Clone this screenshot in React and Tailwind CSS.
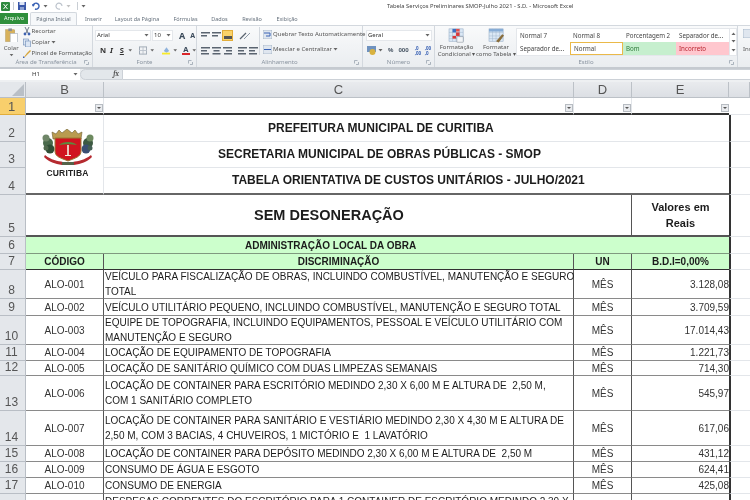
const sans = { fontFamily: '"Noto Sans", sans-serif' };

const rows = [
  ["ALO-001", "VEÍCULO PARA FISCALIZAÇÃO DE OBRAS, INCLUINDO COMBUSTÍVEL, MANUTENÇÃO E SEGURO\nTOTAL", "3.128,08"],
  ["ALO-002", "VEÍCULO UTILITÁRIO PEQUENO, INCLUINDO COMBUSTÍVEL, MANUTENÇÃO E SEGURO TOTAL", "3.709,59"],
  ["ALO-003", "EQUIPE DE TOPOGRAFIA, INCLUINDO EQUIPAMENTOS, PESSOAL E VEÍCULO UTILITÁRIO COM\nMANUTENÇÃO E SEGURO", "17.014,43"],
  ["ALO-004", "LOCAÇÃO DE EQUIPAMENTO DE TOPOGRAFIA", "1.221,73"],
  ["ALO-005", "LOCAÇÃO DE SANITÁRIO QUÍMICO COM DUAS LIMPEZAS SEMANAIS", "714,30"],
  ["ALO-006", "LOCAÇÃO DE CONTAINER PARA ESCRITÓRIO MEDINDO 2,30 X 6,00 M E ALTURA DE  2,50 M,\nCOM 1 SANITÁRIO COMPLETO", "545,97"],
  ["ALO-007", "LOCAÇÃO DE CONTAINER PARA SANITÁRIO E VESTIÁRIO MEDINDO 2,30 X 4,30 M E ALTURA DE\n2,50 M, COM 3 BACIAS, 4 CHUVEIROS, 1 MICTÓRIO E  1 LAVATÓRIO", "617,06"],
  ["ALO-008", "LOCAÇÃO DE CONTAINER PARA DEPÓSITO MEDINDO 2,30 X 6,00 M E ALTURA DE  2,50 M", "431,12"],
  ["ALO-009", "CONSUMO DE ÁGUA E ESGOTO", "624,41"],
  ["ALO-010", "CONSUMO DE ENERGIA", "425,08"],
];

function Lines({ n = 3, align = "l" }) {
  const w = [9, 6, 8];
  return (
    <svg width="11" height="10" viewBox="0 0 11 10">
      {Array.from({ length: n }).map((_, i) => {
        const len = w[i % 3];
        const x = align === "l" ? 1 : align === "r" ? 10 - len : (11 - len) / 2;
        return <rect key={i} x={x} y={1 + i * 3} width={len} height="1.5" fill="#5a6470" />;
      })}
    </svg>
  );
}

function Arrow({ className = "" }) {
  return (
    <svg width="5" height="3" viewBox="0 0 5 3" className={className}>
      <path d="M0.5 0h4L2.5 2.5z" fill="#666" />
    </svg>
  );
}

function Launcher() {
  return (
    <svg width="5" height="5" viewBox="0 0 5 5" className="absolute right-[3px] bottom-[2px]">
      <path d="M0.5 0.5h3M0.5 0.5v3M4.5 2v2.5H2" stroke="#9aa4b0" strokeWidth="0.8" fill="none" />
    </svg>
  );
}

function Group({ width, label, children }) {
  return (
    <div className={`${width} relative flex flex-col border-r border-[#d3d8de] shrink-0`}>
      <div className="flex-1 min-h-0 flex">{children}</div>
      <div className="h-[10px] text-center text-[6px] leading-[10px] text-[#8a94a0]">{label}</div>
      <Launcher />
    </div>
  );
}

function Combo({ className, children }) {
  return (
    <div className={`${className} h-[11px] bg-white border border-[#e4e7eb] flex items-center justify-between px-[1px] text-[6px] text-[#333]`}>
      <span>{children}</span>
      <Arrow />
    </div>
  );
}

function GalleryCell({ className = "", children }) {
  return <div className={`h-[13px] w-[53px] flex items-center px-[3px] text-[6.2px] whitespace-nowrap overflow-hidden ${className}`}>{children}</div>;
}

function GridIcon({ kind }) {
  return (
    <svg width="19" height="16" viewBox="0 0 19 17">
      <rect x="1" y="1" width="16" height="14" fill="#dbe8f5" stroke="#8fa7c2" strokeWidth="0.6" />
      <path d="M1 5h16M1 9h16M1 12h16M5 1v14M9 1v14M13 1v14" stroke="#9db3cb" strokeWidth="0.5" />
      {kind === "cond" ? (
        <>
          <rect x="5" y="1" width="4" height="4" fill="#3b6fc2" />
          <rect x="9" y="5" width="4" height="4" fill="#d9383a" />
          <rect x="5" y="9" width="4" height="3" fill="#d9383a" />
          <rect x="9" y="1" width="4" height="3" fill="#e0504f" />
          <rect x="10" y="10" width="7" height="6" fill="#f2f4f7" stroke="#6d7783" strokeWidth="0.5" />
        </>
      ) : (
        <>
          <rect x="1" y="1" width="16" height="3" fill="#86acd6" />
          <path d="M9 15l7-8 2 1.5-6 8z" fill="#8a6d3b" />
        </>
      )}
    </svg>
  );
}

function Logo() {
  return (
    <div className="flex flex-col items-center pl-[6px]">
      <svg width="54" height="38" viewBox="0 0 54 38">
        <circle cx="7" cy="14" r="5" fill="#4a6a4c" />
        <circle cx="5" cy="9" r="3.5" fill="#6f8668" />
        <circle cx="9" cy="20" r="4.5" fill="#2f4e36" />
        <circle cx="5" cy="19" r="2.5" fill="#50694e" />
        <circle cx="47" cy="14" r="5" fill="#3d5a42" />
        <circle cx="49" cy="9" r="3.5" fill="#6d8a5f" />
        <circle cx="45" cy="20" r="4.5" fill="#3a4f73" />
        <circle cx="49" cy="19" r="2.5" fill="#455f55" />
        <path d="M12 10l-1-7 4 2 3-4 3 3 5-4 5 4 3-3 3 4 4-2-1 7z" fill="#b99b50" stroke="#6f5f30" strokeWidth="0.6" />
        <path d="M14 9h26v13c0 6-6 7-13 10-7-3-13-4-13-10z" fill="#d01420" stroke="#9b7b35" strokeWidth="1" />
        <path d="M18 16c4-4 14-4 18 0-5-1-13-1-18 0z" fill="#5b8a3e" />
        <rect x="26.2" y="16" width="1.6" height="10" fill="#f5efe4" />
        <rect x="24" y="26" width="6" height="1" fill="#f5efe4" />
        <path d="M4 26c6 5 13 6 18 7l-1 3c-7-1-13-3-18-8zM50 26c-6 5-13 6-18 7l1 3c7-1 13-3 18-8z" fill="#b52a30" />
        <path d="M21 33h12v3H21z" fill="#55634a" />
      </svg>
      <div className="text-[8.5px] leading-[9px] mt-[2px] font-bold tracking-[0.2px] text-[#222]">CURITIBA</div>
    </div>
  );
}

function RowHead({ children, active, className = "" }) {
  return (
    <div className={`border-r border-b border-[#b9bec5] flex items-end justify-center pr-[2px] text-[12px] leading-[15px] text-[#555] ${active ? "bg-[#f8cf6c]" : "bg-[#e4e7eb]"} ${className}`}>
      {children}
    </div>
  );
}

function FCell({ className = "" }) {
  return <div className={`border-b border-[#e3e6ea] ${className}`} />;
}

function Filter() {
  return (
    <div className="absolute right-0 bottom-[1px] w-[8px] h-[8px] bg-[#e9ebee] border border-[#b7bcc2] flex items-center justify-center">
      <svg width="4" height="2" viewBox="0 0 4 2"><path d="M0 0h4L2 2z" fill="#555" /></svg>
    </div>
  );
}

export default function App() {
  return (
    <div className="w-[750px] h-[500px] overflow-hidden bg-white flex flex-col blur-[0.35px]" style={sans}>
      {/* Title bar */}
      <div className="h-[12px] shrink-0 flex items-center relative bg-white">
        <div className="flex items-center gap-[3px] pl-[1px]">
          <svg width="9" height="9" viewBox="0 0 9 9"><rect width="9" height="9" rx="1" fill="#2f8a3f" /><path d="M2.5 2l4 5M6.5 2l-4 5" stroke="#fff" strokeWidth="1" /></svg>
          <div className="w-px h-[8px] bg-[#c9ced4]" />
          <svg width="8" height="8" viewBox="0 0 8 8" className="ml-[1px]"><rect width="8" height="8" fill="#3a57a8" /><rect x="1.5" y="0" width="5" height="3" fill="#dfe6f5" /><rect x="2" y="5" width="4" height="3" fill="#8ea1d0" /></svg>
          <svg width="8" height="8" viewBox="0 0 8 8" className="ml-[3px]"><path d="M1 4a3 3 0 1 1 2 3" stroke="#3a62b5" strokeWidth="1.4" fill="none" /><path d="M0 2l3 .5L1 5z" fill="#3a62b5" /></svg>
          <Arrow />
          <svg width="8" height="8" viewBox="0 0 8 8" className="ml-[4px]"><path d="M7 4a3 3 0 1 0-2 3" stroke="#bcc3cc" strokeWidth="1.2" fill="none" /></svg>
          <Arrow className="opacity-40" />
          <div className="w-px h-[8px] bg-[#c9ced4] ml-[3px]" />
          <Arrow />
        </div>
        <div className="absolute left-[387px] top-[0px] text-[5.8px] leading-[12px] text-[#444] whitespace-nowrap">Tabela Serviços Preliminares SMOP-Julho 2021 - S.D.  -  Microsoft Excel</div>
      </div>

      {/* Tabs */}
      <div className="h-[13px] shrink-0 flex items-end text-[5.5px] text-[#66717d] bg-white">
        <div className="w-[28px] h-[11px] bg-[#2f8f3c] text-white flex items-center justify-center mb-px">Arquivo</div>
        <div className="ml-[2px] w-[47px] h-[13px] bg-[#f6f8fa] border border-b-0 border-[#d3d8de] rounded-t-[2px] flex items-center justify-center">Página Inicial</div>
        <div className="ml-[8px] w-[16px] text-center h-[12px] leading-[12px]">Inserir</div>
        <div className="ml-[13px] w-[46px] text-center h-[12px] leading-[12px] whitespace-nowrap">Layout da Página</div>
        <div className="ml-[13px] w-[25px] text-center h-[12px] leading-[12px]">Fórmulas</div>
        <div className="ml-[13px] w-[17px] text-center h-[12px] leading-[12px]">Dados</div>
        <div className="ml-[13px] w-[22px] text-center h-[12px] leading-[12px]">Revisão</div>
        <div className="ml-[13px] w-[22px] text-center h-[12px] leading-[12px]">Exibição</div>
      </div>

      {/* Ribbon */}
      <div className="h-[42px] shrink-0 flex bg-gradient-to-b from-[#f9fafb] to-[#eaedf0] border-t border-[#d3d8de] text-[#555] overflow-hidden">
        <Group width="w-[93px]" label="Área de Transferência">
          <div className="w-[25px] flex flex-col items-center pt-[2px] text-[6px] leading-[7px]">
            <svg width="15" height="16" viewBox="0 0 15 16"><rect x="1" y="2" width="10" height="13" fill="#d8b25c" stroke="#a8883f" strokeWidth="0.5" /><rect x="4" y="0.5" width="4" height="3" fill="#8b8f96" /><rect x="6" y="6" width="8" height="10" fill="#fff" stroke="#9aa6b4" strokeWidth="0.6" /></svg>
            <span className="mt-[3px]">Colar</span>
            <Arrow className="mt-[2px]" />
          </div>
          <div className="flex flex-col gap-[2px] pt-[1px] text-[6px] leading-[9px]">
            <div className="flex items-center gap-[1px]"><svg width="8" height="9" viewBox="0 0 8 9"><path d="M2 0l3 6M6 0L3 6" stroke="#6f7b88" /><circle cx="2" cy="7" r="1.4" fill="#3d62b0" /><circle cx="6" cy="7" r="1.4" fill="#3d62b0" /></svg>Recortar</div>
            <div className="flex items-center gap-[1px]"><svg width="8" height="9" viewBox="0 0 8 9"><rect x="0.5" y="1" width="5" height="6" fill="#dbe6f4" stroke="#6d8ab5" strokeWidth="0.6" /><rect x="2.5" y="3" width="5" height="6" fill="#dbe6f4" stroke="#6d8ab5" strokeWidth="0.6" /></svg>Copiar <Arrow /></div>
            <div className="flex items-center gap-[1px] whitespace-nowrap"><svg width="8" height="9" viewBox="0 0 8 9"><path d="M1 8l3-4 3-3 1 1-3 3-3 3z" fill="#d7a53a" /><path d="M0 7l2 2-2 0z" fill="#3d62b0" /></svg>Pincel de Formatação</div>
          </div>
        </Group>

        <Group width="w-[104px]" label="Fonte">
          <div className="flex flex-col pl-[2px] pt-[4px] gap-[4px] w-full">
            <div className="flex items-center gap-px">
              <Combo className="w-[56px]">Arial</Combo>
              <Combo className="w-[21px]">10</Combo>
              <span className="ml-[5px] text-[9px] leading-[10px] font-bold text-[#3b4a5a]">A</span>
              <span className="ml-[4px] text-[7px] leading-[10px] font-bold text-[#3b4a5a]">A</span>
            </div>
            <div className="flex items-center pl-[5px] text-[7.5px] leading-[10px] text-[#333]">
              <b className="w-[11px]">N</b>
              <i className="w-[11px] font-bold">I</i>
              <u className="w-[9px] font-bold">S</u>
              <Arrow />
              <svg width="9" height="9" viewBox="0 0 9 9" className="ml-[7px]"><rect x="0.5" y="0.5" width="8" height="8" fill="none" stroke="#9aa4b0" /><path d="M4.5 0v9M0 4.5h9" stroke="#b8c0ca" /></svg>
              <Arrow className="ml-[3px]" />
              <svg width="10" height="10" viewBox="0 0 10 10" className="ml-[7px]"><path d="M2 6l3-4 3 4-3 2z" fill="#8fb2dc" /><rect y="8" width="9" height="2" fill="#f7ea2b" /></svg>
              <Arrow className="ml-[2px]" />
              <span className="ml-[5px] w-[8px] text-center font-bold leading-[8px] border-b-2 border-[#d9262a] text-[#3b4a5a]">A</span>
              <Arrow className="ml-[2px]" />
            </div>
          </div>
        </Group>

        <Group width="w-[166px]" label="Alinhamento">
          <div className="flex flex-col pl-[3px] pt-[4px] gap-[4px] w-[66px]">
            <div className="flex items-center h-[11px]">
              <Lines n={2} />
              <Lines n={2} />
              <div className="bg-[#fbd36a] border border-[#e2ad3a] w-[11px] h-[11px] flex items-center justify-center mr-[6px]"><div className="w-[8px] h-[3px] bg-[#555] mt-[3px]" /></div>
              <svg width="12" height="9" viewBox="0 0 12 9"><path d="M1 8l6-6" stroke="#5a6470" strokeWidth="1.3" /><path d="M5 8l6-6" stroke="#8b97a6" /></svg>
            </div>
            <div className="flex items-center h-[11px]">
              <Lines align="l" />
              <Lines align="c" />
              <Lines align="r" />
              <div className="ml-[4px]"><Lines /></div>
              <Lines />
            </div>
          </div>
          <div className="flex flex-col pt-[2px] gap-[4px] text-[6px] leading-[11px] whitespace-nowrap border-l border-[#d3d8de] pl-[3px] h-[28px] mt-[1px]">
            <div className="flex items-center gap-[1px]"><svg width="9" height="9" viewBox="0 0 9 9"><rect width="9" height="9" fill="#dfe6ef" stroke="#8ea0b5" strokeWidth="0.6" /><path d="M1 3h6v3H3" stroke="#3a62b5" fill="none" /></svg>Quebrar Texto Automaticamente</div>
            <div className="flex items-center gap-[1px]"><svg width="9" height="9" viewBox="0 0 9 9"><rect width="9" height="9" fill="#dfe6ef" stroke="#8ea0b5" strokeWidth="0.6" /><path d="M1 4.5h7" stroke="#3a62b5" /></svg>Mesclar e Centralizar <Arrow /></div>
          </div>
        </Group>

        <Group width="w-[72px]" label="Número">
          <div className="flex flex-col pl-[3px] pt-[4px] gap-[4px]">
            <Combo className="w-[66px]">Geral</Combo>
            <div className="flex items-center pl-[1px] text-[6px] leading-[11px] text-[#4d5a68]">
              <svg width="9" height="9" viewBox="0 0 9 9"><rect width="9" height="6" fill="#6f92bf" /><circle cx="5.5" cy="6" r="3" fill="#d9b23f" /></svg>
              <Arrow className="ml-[2px]" />
              <span className="ml-[5px] font-bold">%</span>
              <span className="ml-[5px] font-bold">000</span>
              <span className="ml-[6px] text-[4.5px] leading-[5px] w-[9px] text-[#3a62b5] font-bold">,0 ,00</span>
              <span className="ml-[1px] text-[4.5px] leading-[5px] w-[9px] text-[#3a62b5] font-bold">,00 ,0</span>
            </div>
          </div>
        </Group>

        <Group width="w-[303px]" label="Estilo">
          <div className="w-[41px] flex flex-col items-center pt-[2px] text-[6px] leading-[6.5px] text-center whitespace-nowrap ml-[1px]">
            <GridIcon kind="cond" />
            <span className="mt-[1px]">Formatação</span>
            <span>Condicional ▾</span>
          </div>
          <div className="w-[38px] flex flex-col items-center pt-[2px] text-[6px] leading-[6.5px] text-center whitespace-nowrap">
            <GridIcon kind="table" />
            <span className="mt-[1px]">Formatar</span>
            <span>como Tabela ▾</span>
          </div>
          <div className="ml-[1px] mt-[2px] h-[28px] flex border border-[#e4e7eb] bg-white w-[221px]">
            <div className="grid grid-cols-4 w-[213px] text-[#444]">
              <GalleryCell>Normal 7</GalleryCell>
              <GalleryCell>Normal 8</GalleryCell>
              <GalleryCell>Porcentagem 2</GalleryCell>
              <GalleryCell>Separador de...</GalleryCell>
              <GalleryCell>Separador de...</GalleryCell>
              <GalleryCell className="border border-[#eab949]">Normal</GalleryCell>
              <GalleryCell className="bg-[#c6efce] text-[#2f7a3a]">Bom</GalleryCell>
              <GalleryCell className="bg-[#ffc7ce] text-[#b8232e]">Incorreto</GalleryCell>
            </div>
            <div className="flex flex-col w-[7px] border-l border-[#e4e7eb] items-center justify-around">
              <Arrow className="rotate-180" />
              <Arrow />
              <Arrow />
            </div>
          </div>
        </Group>

        <div className="pl-[5px] pt-[3px] flex flex-col text-[6px] leading-[8px] whitespace-nowrap">
          <svg width="9" height="9" viewBox="0 0 9 9" className="mb-[7px]"><rect width="9" height="9" fill="#dfe6ef" stroke="#8ea0b5" strokeWidth="0.6" /></svg>
          Inserir
        </div>
      </div>

      {/* Formula bar */}
      <div className="h-[2px] shrink-0 bg-[#c5cad0]" />
      <div className="h-[11px] shrink-0 flex items-stretch bg-[#e9ecef] text-[6px] text-[#333]">
        <div className="w-[80px] bg-white flex items-center justify-between pl-[32px] pr-[2px]">H1<Arrow /></div>
        <div className="w-[43px] bg-[#e3e7eb] rounded-l-[6px] border border-[#ccd1d7] flex items-center justify-end pr-[3px] italic font-bold font-serif text-[7px] text-[#555]">fx</div>
        <div className="flex-1 bg-white border-y border-[#ccd1d7]" />
      </div>
      <div className="h-[2px] shrink-0 bg-[#eef0f2]" />

      {/* Sheet */}
      <div
        className="grid shrink-0 grid-cols-[26px_78px_470px_58px_97px_21px] grid-rows-[16px_17px_27px_26px_27px_42px_17px_16px_29px_17px_29px_16px_15px_35px_35px_16px_16px_16px_40px] text-[#1c1c1c] text-[10px] leading-[15px]"
        style={{ fontFamily: '"Liberation Sans", Arial, sans-serif' }}
      >
        <div className="bg-[#e4e7eb] border-r border-b border-[#b9bec5] relative">
          <svg width="12" height="12" viewBox="0 0 12 12" className="absolute right-[1px] bottom-[1px]"><path d="M12 0v12H0z" fill="#b9bfc6" /></svg>
        </div>
        {["B", "C", "D", "E", ""].map((c) => (
          <div key={c || "f"} className="bg-gradient-to-b from-[#e9ebee] to-[#dcdfe4] border-r border-b border-[#bcc1c7] flex items-center justify-center text-[13px] text-[#555]">{c}</div>
        ))}

        <RowHead active className="!items-center border-b-[#e2ad3a]"><span className="text-[13px]">1</span></RowHead>
        <div className="relative border-r border-[#e3e6ea] border-b-2 border-b-[#333]"><Filter /></div>
        <div className="relative border-r border-[#e3e6ea] border-b-2 border-b-[#333]"><Filter /></div>
        <div className="relative border-r border-[#e3e6ea] border-b-2 border-b-[#333]"><Filter /></div>
        <div className="relative border-b-2 border-b-[#333]"><Filter /></div>
        <FCell />

        <RowHead>2</RowHead>
        <div className="row-span-3 border-r border-[#e3e6ea] border-b-2 border-b-[#666] flex items-center justify-center pb-[1px]"><Logo /></div>
        <div className="col-span-3 border-b border-[#e3e6ea] flex items-center pl-[164px] pt-[1px] text-[12px] font-bold whitespace-nowrap">PREFEITURA MUNICIPAL DE CURITIBA</div>
        <FCell className="border-l-2 border-l-[#333]" />
        <RowHead>3</RowHead>
        <div className="col-span-3 border-b border-[#e3e6ea] flex items-center pl-[114px] text-[12px] font-bold whitespace-nowrap">SECRETARIA MUNICIPAL DE OBRAS PÚBLICAS - SMOP</div>
        <FCell className="border-l-2 border-l-[#333]" />
        <RowHead>4</RowHead>
        <div className="col-span-3 border-b-2 border-b-[#666] flex items-center pl-[128px] text-[12px] font-bold whitespace-nowrap">TABELA ORIENTATIVA DE CUSTOS UNITÁRIOS - JULHO/2021</div>
        <FCell className="border-l-2 border-l-[#333]" />

        <RowHead>5</RowHead>
        <div className="col-span-3 border-b-2 border-b-[#555] border-r border-r-[#555] flex items-center pl-[228px] text-[14.5px] font-bold whitespace-nowrap">SEM DESONERAÇÃO</div>
        <div className="border-b-2 border-b-[#555] flex items-center justify-center text-center text-[11px] leading-[16px] font-bold">Valores em<br />Reais</div>
        <FCell className="border-l-2 border-l-[#333]" />

        <RowHead>6</RowHead>
        <div className="col-span-4 bg-[#ccffcc] border-b border-b-[#7f9a7f] flex items-center pl-[219px] font-bold">ADMINISTRAÇÃO LOCAL DA OBRA</div>
        <FCell className="border-l-2 border-l-[#333]" />

        <RowHead>7</RowHead>
        <div className="bg-[#ccffcc] border-r border-r-[#555] border-b border-b-[#333] flex items-center justify-center font-bold">CÓDIGO</div>
        <div className="bg-[#ccffcc] border-r border-r-[#555] border-b border-b-[#333] flex items-center justify-center font-bold">DISCRIMINAÇÃO</div>
        <div className="bg-[#ccffcc] border-r border-r-[#555] border-b border-b-[#333] flex items-center justify-center font-bold">UN</div>
        <div className="bg-[#ccffcc] border-b border-b-[#333] flex items-center justify-center font-bold">B.D.I=0,00%</div>
        <FCell className="border-l-2 border-l-[#333]" />

        {rows.map(([code, desc, val], i) => (
          <div key={code} className="contents">
            <RowHead>{i + 8}</RowHead>
            <div className="border-r border-r-[#555] border-b border-b-[#8a8a8a] flex items-center justify-center text-[#333]">{code}</div>
            <div className="border-r border-r-[#555] border-b border-b-[#8a8a8a] flex items-center pl-[1px] whitespace-pre">{desc}</div>
            <div className="border-r border-r-[#555] border-b border-b-[#8a8a8a] flex items-center justify-center text-[#333]">MÊS</div>
            <div className="border-b border-b-[#8a8a8a] flex items-center justify-end text-[#333]">{val}</div>
            <FCell className="border-l-2 border-l-[#333]" />
          </div>
        ))}

        <RowHead />
        <div className="border-r border-r-[#555]" />
        <div className="border-r border-r-[#555] pl-[1px] whitespace-nowrap overflow-hidden">DESPESAS CORRENTES DO ESCRITÓRIO PARA 1 CONTAINER DE ESCRITÓRIO MEDINDO 2,30 X</div>
        <div className="border-r border-r-[#555]" />
        <div />
        <div className="border-l-2 border-l-[#333]" />
      </div>
    </div>
  );
}
